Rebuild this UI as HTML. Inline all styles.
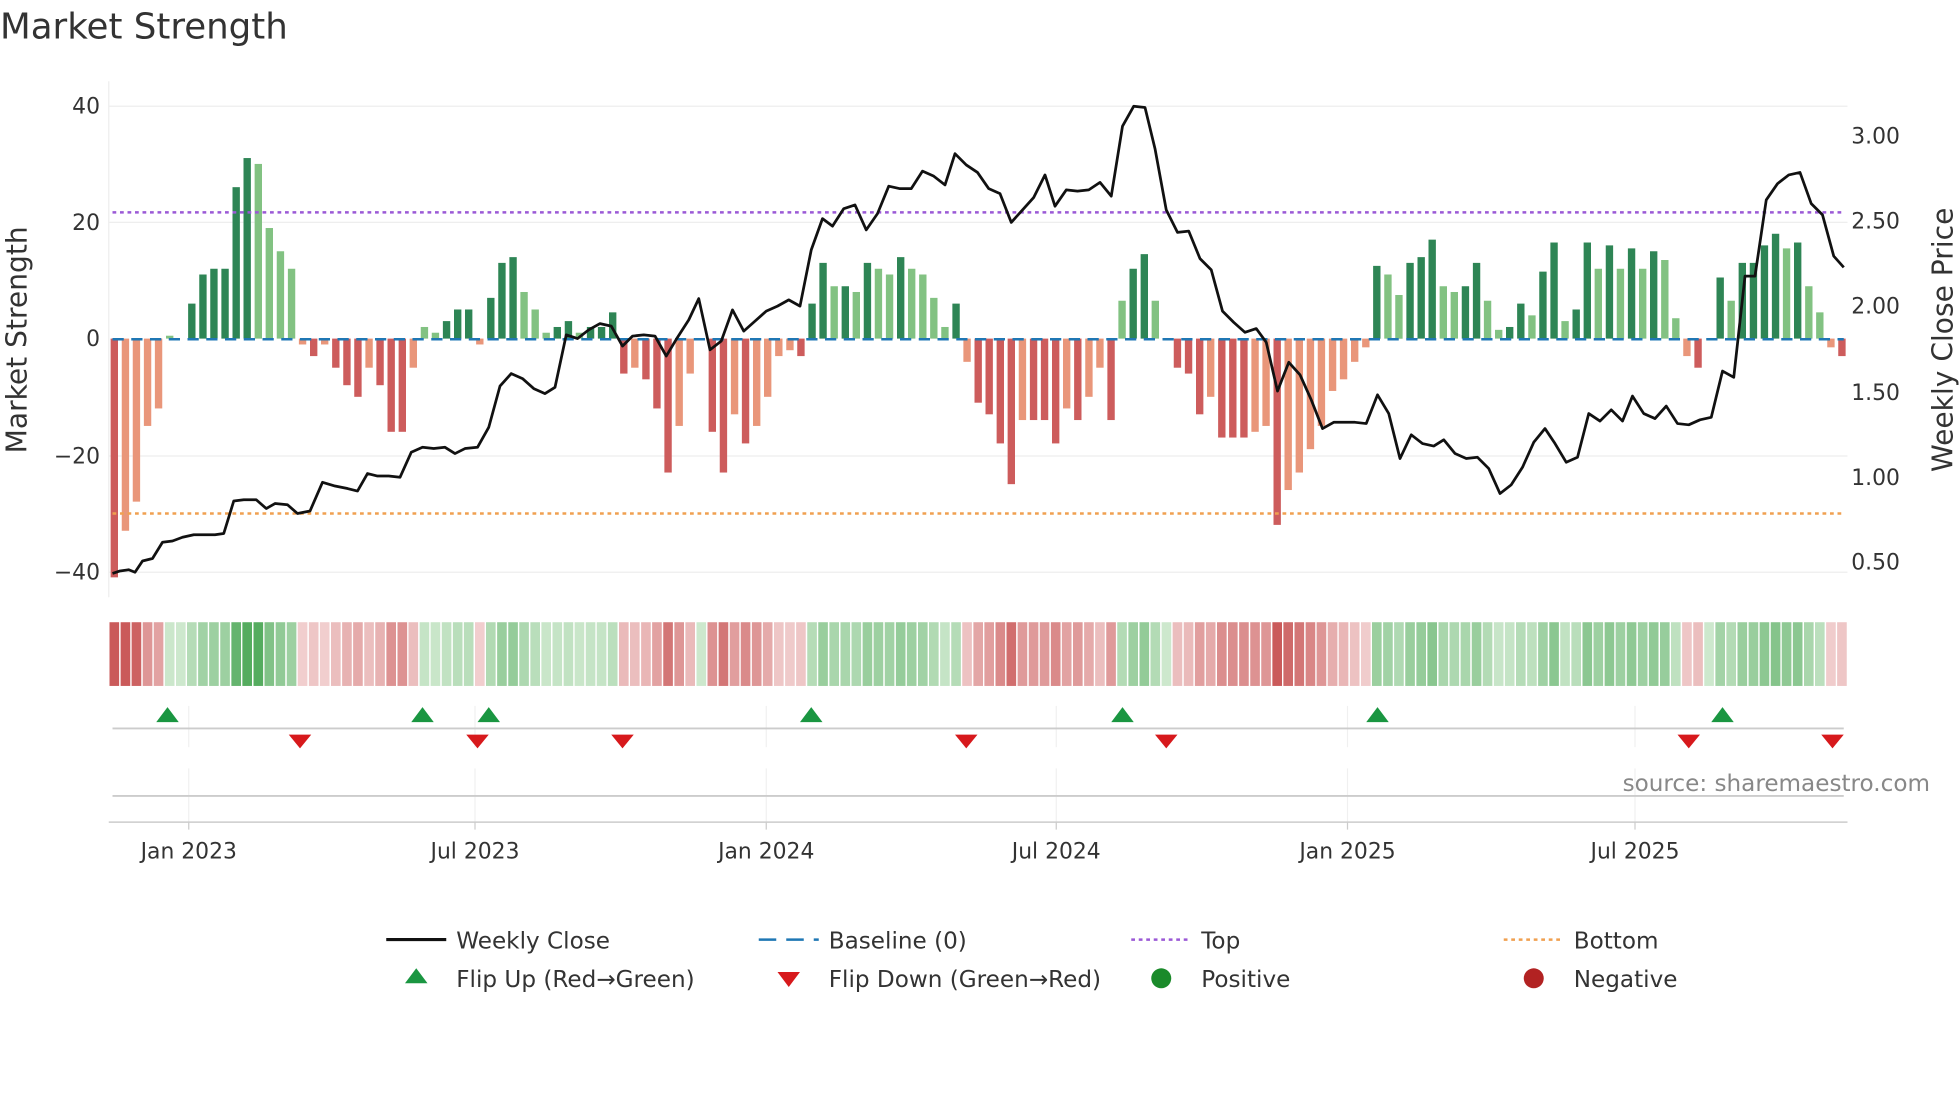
<!DOCTYPE html>
<html><head><meta charset="utf-8"><style>
html,body{margin:0;padding:0;background:#fff;}
svg{display:block;font-family:"DejaVu Sans","Liberation Sans",sans-serif;}
</style></head><body>
<svg id="c" width="1960" height="1102" viewBox="0 0 1568 882" preserveAspectRatio="none" xmlns="http://www.w3.org/2000/svg">
<rect width="1568" height="882" fill="#fff"/>
<text x="0" y="31" font-size="28.5" fill="#333">Market Strength</text>
<g stroke="#eee" stroke-width="1">
<line x1="87" y1="85" x2="1478" y2="85"/><line x1="87" y1="178" x2="1478" y2="178"/>
<line x1="87" y1="365" x2="1478" y2="365"/><line x1="87" y1="458" x2="1478" y2="458"/>
</g>
<line x1="87" y1="65" x2="87" y2="478" stroke="#eee"/>
<g font-size="17.5" fill="#333" text-anchor="end">
<text x="80" y="91">40</text><text x="80" y="184">20</text><text x="80" y="277">0</text>
<text x="80" y="371">−20</text><text x="80" y="464">−40</text>
</g>
<g font-size="17.5" fill="#333">
<text x="1481" y="115">3.00</text><text x="1481" y="183">2.50</text><text x="1481" y="251">2.00</text>
<text x="1481" y="320">1.50</text><text x="1481" y="388">1.00</text><text x="1481" y="456">0.50</text>
</g>
<text transform="translate(21,272) rotate(-90)" font-size="22.5" fill="#333" text-anchor="middle">Market Strength</text>
<text transform="translate(1562,272) rotate(-90)" font-size="22.5" fill="#333" text-anchor="middle">Weekly Close Price</text>
<g id="bars"></g>
<line x1="90" y1="271.5" x2="1475" y2="271.5" stroke="#1f77b4" stroke-width="2" stroke-dasharray="9,6"/>
<line x1="90" y1="170" x2="1475" y2="170" stroke="#9b59d6" stroke-width="2" stroke-dasharray="3,3"/>
<line x1="90" y1="411" x2="1475" y2="411" stroke="#f0a050" stroke-width="2" stroke-dasharray="3,3"/>
<polyline id="price" fill="none" stroke="#111" stroke-width="2.2" stroke-linejoin="round"/>
<g id="heat"></g>
<g stroke="#f0f0f0" stroke-width="1">
<line x1="151" y1="565" x2="151" y2="598"/><line x1="380" y1="565" x2="380" y2="598"/><line x1="613" y1="565" x2="613" y2="598"/>
<line x1="845" y1="565" x2="845" y2="598"/><line x1="1078" y1="565" x2="1078" y2="598"/><line x1="1308" y1="565" x2="1308" y2="598"/>
<line x1="151" y1="615" x2="151" y2="658"/><line x1="380" y1="615" x2="380" y2="658"/><line x1="613" y1="615" x2="613" y2="658"/>
<line x1="845" y1="615" x2="845" y2="658"/><line x1="1078" y1="615" x2="1078" y2="658"/><line x1="1308" y1="615" x2="1308" y2="658"/>
</g>
<line x1="90" y1="583" x2="1475" y2="583" stroke="#ccc" stroke-width="1.5"/>
<line x1="90" y1="637" x2="1475" y2="637" stroke="#ccc" stroke-width="1.5"/>
<line x1="87" y1="658" x2="1478" y2="658" stroke="#ccc" stroke-width="1.2"/>
<g stroke="#ccc"><line x1="151" y1="658" x2="151" y2="664"/><line x1="380" y1="658" x2="380" y2="664"/><line x1="613" y1="658" x2="613" y2="664"/><line x1="845" y1="658" x2="845" y2="664"/><line x1="1078" y1="658" x2="1078" y2="664"/><line x1="1308" y1="658" x2="1308" y2="664"/></g>
<g id="mk"></g>
<text x="1544" y="633" font-size="18.5" fill="#888" text-anchor="end">source: sharemaestro.com</text>
<g font-size="17.5" fill="#333" text-anchor="middle">
<text x="151" y="687">Jan 2023</text><text x="380" y="687">Jul 2023</text><text x="613" y="687">Jan 2024</text>
<text x="845" y="687">Jul 2024</text><text x="1078" y="687">Jan 2025</text><text x="1308" y="687">Jul 2025</text>
</g>
<g font-size="18.5" fill="#333">
<line x1="309" y1="752" x2="357" y2="752" stroke="#111" stroke-width="2.5"/><text x="365" y="759">Weekly Close</text>
<line x1="607" y1="752" x2="655" y2="752" stroke="#1f77b4" stroke-width="2" stroke-dasharray="14,8"/><text x="663" y="759">Baseline (0)</text>
<line x1="905" y1="752" x2="953" y2="752" stroke="#9b59d6" stroke-width="2" stroke-dasharray="3,3"/><text x="961" y="759">Top</text>
<line x1="1203" y1="752" x2="1251" y2="752" stroke="#f0a050" stroke-width="2" stroke-dasharray="3,3"/><text x="1259" y="759">Bottom</text>
<polygon points="333,775 324,787 342,787" fill="#1a9641"/><text x="365" y="790">Flip Up (Red→Green)</text>
<polygon points="622,778 640,778 631,790" fill="#d7191c"/><text x="663" y="790">Flip Down (Green→Red)</text>
<circle cx="929" cy="783" r="8" fill="#1a8a2a"/><text x="961" y="790">Positive</text>
<circle cx="1227" cy="783" r="8" fill="#b22222"/><text x="1259" y="790">Negative</text>
</g>
</svg>
<script>
var v=[-41,-33,-28,-15,-12,0.5,0,6,11,12,12,26,31,30,19,15,12,-1,-3,-1,-5,-8,-10,-5,-8,-16,-16,-5,2,1,3,5,5,-1,7,13,14,8,5,1,2,3,1,2,2,4.5,-6,-5,-7,-12,-23,-15,-6,0,-16,-23,-13,-18,-15,-10,-3,-2,-3,6,13,9,9,8,13,12,11,14,12,11,7,2,6,-4,-11,-13,-18,-25,-14,-14,-14,-18,-12,-14,-10,-5,-14,6.5,12,14.5,6.5,0,-5,-6,-13,-10,-17,-17,-17,-16,-15,-32,-26,-23,-19,-15,-9,-7,-4,-1.5,12.5,11,7.5,13,14,17,9,8,9,13,6.5,1.5,2,6,4,11.5,16.5,3,5,16.5,12,16,12,15.5,12,15,13.5,3.5,-3,-5,0,10.5,6.5,13,13,16,18,15.5,16.5,9,4.5,-1.5,-3];
var ns="http://www.w3.org/2000/svg";
function el(t,a,p){var e=document.createElementNS(ns,t);for(var k in a)e.setAttribute(k,a[k]);p.appendChild(e);return e;}
var bars=document.getElementById('bars'),heat=document.getElementById('heat');
var n=v.length,x0=87,step=(1478-87)/n;
for(var i=0;i<n;i++){
 var x=x0+i*step,val=v[i],prev=i?v[i-1]:0,dark=Math.abs(val)>=Math.abs(prev);
 var c=val>=0?(dark?'#2e8555':'#82c282'):(dark?'#cd5c5c':'#e9967a');
 var h=Math.abs(val)*4.66,y=val>=0?271-h:271;
 if(h>0.3)el('rect',{x:(x+1.5).toFixed(1),y:y.toFixed(1),width:(step-3).toFixed(1),height:h.toFixed(1),fill:c},bars);
 var t=Math.min(1,Math.abs(val)/30),hc;
 if(val>=0){hc='rgb('+Math.round(205-120*t)+','+Math.round(232-60*t)+','+Math.round(205-110*t)+')';}
 else{hc='rgb('+Math.round(242-40*t)+','+Math.round(210-120*t)+','+Math.round(210-120*t)+')';}
 el('rect',{x:(x+0.6).toFixed(1),y:498,width:(step-1.2).toFixed(1),height:51,fill:hc},heat);
}
var p=[90,459,96,457,103,456,108,458,114,449,122,447,130,434,138,433,146,430,155,428,163,428,172,428,179,427,187,401,195,400,205,400,213,407,220,403,230,404,238,411,248,409,258,386,268,389,278,391,286,393,294,379,302,381,311,381,320,382,329,362,338,358,347,359,356,358,364,363,372,359,382,358,391,342,400,309,409,299,418,303,427,311,436,315,444,310,453,268,462,271,471,264,480,259,489,261,498,277,506,269,515,268,524,269,533,285,542,270,551,256,559,239,568,280,577,273,586,248,595,265,604,257,613,249,622,245,631,240,640,245,649,200,658,175,666,181,675,167,684,164,693,184,702,171,711,149,720,151,729,151,738,137,747,141,756,148,764,123,773,132,782,138,791,151,800,155,809,178,818,168,827,158,836,140,844,165,853,152,862,153,871,152,880,146,889,157,898,101,907,85,916,86,924,119,933,168,942,186,951,185,960,207,969,216,978,249,987,258,996,266,1005,263,1013,274,1022,313,1031,290,1040,300,1049,320,1058,343,1067,338,1076,338,1084,338,1093,339,1102,316,1111,331,1120,367,1129,348,1138,355,1147,357,1155,352,1164,363,1173,367,1182,366,1191,375,1200,395,1209,388,1218,374,1227,354,1236,343,1244,355,1253,370,1262,366,1271,331,1280,337,1289,328,1298,337,1306,317,1315,331,1324,335,1333,325,1342,339,1351,340,1360,336,1369,334,1378,297,1387,302,1396,221,1404,221,1413,160,1422,147,1431,140,1440,138,1449,163,1458,172,1467,205,1475,214];
var s=[];for(var j=0;j<p.length;j+=2)s.push(p[j]+','+p[j+1]);
document.getElementById('price').setAttribute('points',s.join(' '));
var mk=document.getElementById('mk');
[134,338,391,649,898,1102,1378].forEach(function(x){el('polygon',{points:x+',566 '+(x-9)+',578 '+(x+9)+',578',fill:'#1a9641'},mk);});
[240,382,498,773,933,1351,1466].forEach(function(x){el('polygon',{points:(x-9)+',588 '+(x+9)+',588 '+x+',599',fill:'#d7191c'},mk);});
</script>
</body></html>
